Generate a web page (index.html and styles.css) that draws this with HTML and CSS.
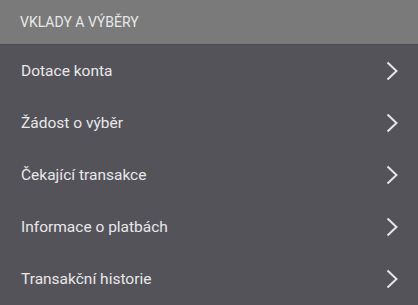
FILE: index.html
```
<!DOCTYPE html>
<html lang="cs">
<head>
<meta charset="utf-8">
<link rel="stylesheet" href="styles.css">
</head>
<body>
<div class="panel">
  <div class="header">VKLADY A VÝBĚRY</div>
  <ul class="menu">
    <li class="item"><span class="label">Dotace konta</span><svg class="chev" viewBox="0 0 12 20" width="12" height="20"><path d="M1.5 1.5 L10.5 10 L1.5 18.5" fill="none" stroke="#e6e6e8" stroke-width="2"/></svg></li>
    <li class="item"><span class="label">Žádost o výběr</span><svg class="chev" viewBox="0 0 12 20" width="12" height="20"><path d="M1.5 1.5 L10.5 10 L1.5 18.5" fill="none" stroke="#e6e6e8" stroke-width="2"/></svg></li>
    <li class="item"><span class="label">Čekající transakce</span><svg class="chev" viewBox="0 0 12 20" width="12" height="20"><path d="M1.5 1.5 L10.5 10 L1.5 18.5" fill="none" stroke="#e6e6e8" stroke-width="2"/></svg></li>
    <li class="item"><span class="label">Informace o platbách</span><svg class="chev" viewBox="0 0 12 20" width="12" height="20"><path d="M1.5 1.5 L10.5 10 L1.5 18.5" fill="none" stroke="#e6e6e8" stroke-width="2"/></svg></li>
    <li class="item"><span class="label">Transakční historie</span><svg class="chev" viewBox="0 0 12 20" width="12" height="20"><path d="M1.5 1.5 L10.5 10 L1.5 18.5" fill="none" stroke="#e6e6e8" stroke-width="2"/></svg></li>
  </ul>
</div>
</body>
</html>
```
FILE: styles.css
```
html, body {
  margin: 0;
  padding: 0;
  background: #545359;
}
body {
  font-family: Roboto, "Noto Sans", sans-serif;
  width: 418px;
  height: 305px;
  overflow: hidden;
}
.panel {
  display: flex;
  flex-direction: column;
}
.header {
  height: 44px;
  background: #7a7a7a;
  color: #e8e8e8;
  font-size: 14px;
  display: flex;
  align-items: center;
  padding-left: 20px;
  border-bottom: 1px solid #4c4c50;
}
.menu {
  list-style: none;
  margin: 0;
  padding: 0;
}
.item {
  height: 52px;
  display: flex;
  align-items: center;
  justify-content: space-between;
  padding: 0 20px 0 21px;
  color: #e8e8ea;
  font-size: 15.5px;
}
.chev {
  display: block;
}
```
